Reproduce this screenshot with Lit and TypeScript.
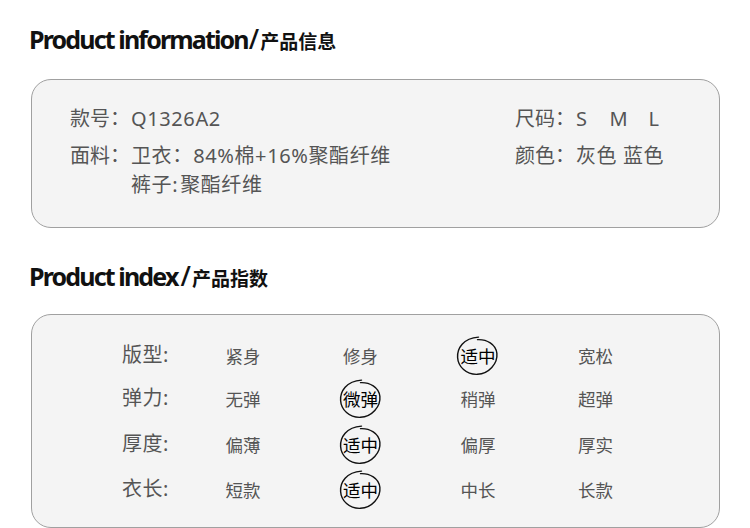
import { LitElement, html, css, svg } from "lit";
import { customElement } from "lit/decorators.js";

const RING = svg`<path d="M25 6.5C34 6 43 11 44 20C45 30 36 40 25 40.5C14 41 6 33 5.5 24C5 15 11 5 26 4" fill="none" stroke="#111" stroke-width="1.4" stroke-linecap="round"/>`;

const ROWS: { label: string; vals: string[]; pick: number }[] = [
  { label: "版型:", vals: ["紧身", "修身", "适中", "宽松"], pick: 2 },
  { label: "弹力:", vals: ["无弹", "微弹", "稍弹", "超弹"], pick: 1 },
  { label: "厚度:", vals: ["偏薄", "适中", "偏厚", "厚实"], pick: 1 },
  { label: "衣长:", vals: ["短款", "适中", "中长", "长款"], pick: 1 },
];

@customElement("app-root")
export class AppRoot extends LitElement {
  static styles = css`
    :host {
      display: block;
      width: 750px;
      height: 528px;
      overflow: hidden;
      background: #fff;
      font-family: "Noto Sans", "Noto Sans CJK SC", sans-serif;
      color: #555;
      box-sizing: border-box;
      padding: 24px 30px 0 29px;
    }
    h2 {
      margin: 0;
      height: 31px;
      line-height: 31px;
      font-size: 25px;
      font-weight: 700;
      color: #111;
      letter-spacing: -1.85px;
      white-space: nowrap;
    }
    h2 i {
      font-style: normal;
      font-size: 27px;
      line-height: 1;
      font-weight: 500;
      letter-spacing: 0;
      margin: 0 1px 0 1px;
    }
    .index-title i {
      margin: 0 1px 0 3px;
    }
    h2 small {
      font-size: 19px;
      letter-spacing: 0;
      font-weight: 700;
    }
    .card {
      margin-left: 2px;
      width: 689px;
      box-sizing: border-box;
      background: #f4f4f4;
      border: 1px solid #a0a0a0;
      border-radius: 20px;
    }
    .info {
      margin-top: 24px;
      height: 149px;
      padding: 25px 0 0 38px;
      display: grid;
      grid-template-columns: 61px 384px 61px auto;
      grid-template-rows: 37px 29px 28px;
      font-size: 20px;
      line-height: 28px;
      letter-spacing: 0.6px;
      align-items: start;
      justify-content: start;
    }
    .lab {
      letter-spacing: 0;
      white-space: nowrap;
    }
    .colon {
      letter-spacing: 0;
      line-height: 1;
      vertical-align: 1px;
    }
    .gap {
      margin-right: 1px;
    }
    .half {
      margin-right: 2px;
    }
    .sizes {
      display: flex;
    }
    .sizes span:nth-child(1) { width: 33.5px; }
    .sizes span:nth-child(2) { width: 39px; }
    .index-title {
      margin-top: 33px;
    }
    .index {
      margin-top: 22px;
      height: 214px;
      padding: 27px 0 0 90px;
      display: grid;
      grid-template-columns: 103.5px repeat(4, 117.5px);
      grid-template-rows: 43px 46px 45px 45px;
      justify-content: start;
    }
    .label {
      font-size: 20px;
      line-height: 26px;
      letter-spacing: 0.5px;
    }
    .val {
      position: relative;
      font-size: 17.5px;
      line-height: 24px;
      margin-top: 2px;
    }
    .val.on {
      color: #000;
    }
    .ring {
      position: absolute;
      left: -8.5px;
      top: -11.5px;
      width: 51px;
      height: 49px;
      pointer-events: none;
    }
  `;

  render() {
    return html`
      <h2>Product information<i>/</i><small>产品信息</small></h2>
      <div class="card info">
        <div class="lab">款号<span class="colon">：</span></div>
        <div>Q1326A2</div>
        <div class="lab">尺码<span class="colon">：</span></div>
        <div class="sizes"><span>S</span><span>M</span><span>L</span></div>
        <div class="lab">面料<span class="colon">：</span></div>
        <div>卫衣<span class="colon gap">：</span>84%棉+16%聚酯纤维</div>
        <div class="lab">颜色<span class="colon">：</span></div>
        <div>灰色 蓝色</div>
        <div></div>
        <div>裤子<span class="half">:</span>聚酯纤维</div>
      </div>
      <h2 class="index-title">Product index<i>/</i><small>产品指数</small></h2>
      <div class="card index">
        ${ROWS.map(
          (r) => html`
            <div class="label">${r.label}</div>
            ${r.vals.map(
              (v, i) => html`<div class="val ${i === r.pick ? "on" : ""}">
                ${v}
                ${i === r.pick
                  ? html`<svg class="ring" viewBox="0 0 50 48">${RING}</svg>`
                  : ""}
              </div>`
            )}
          `
        )}
      </div>
    `;
  }
}
